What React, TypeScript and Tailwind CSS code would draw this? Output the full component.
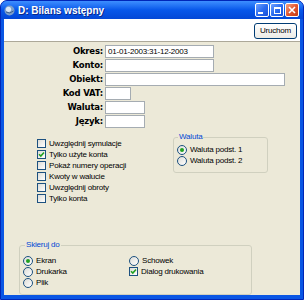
const labelFont = "font-['DejaVu_Sans',sans-serif] font-bold text-[8.5px] text-black";

const fields = [
  { label: "Okres:", width: "w-[109px]", value: "01-01-2003:31-12-2003" },
  { label: "Konto:", width: "w-[109px]", value: "" },
  { label: "Obiekt:", width: "w-[180px]", value: "" },
  { label: "Kod VAT:", width: "w-[26px]", value: "" },
  { label: "Waluta:", width: "w-[40px]", value: "" },
  { label: "Język:", width: "w-[40px]", value: "" },
];

const options = [
  { label: "Uwzględnij symulacje", checked: false },
  { label: "Tylko użyte konta", checked: true },
  { label: "Pokaż numery operacji", checked: false },
  { label: "Kwoty w walucie", checked: false },
  { label: "Uwzględnij obroty", checked: false },
  { label: "Tylko konta", checked: false },
];

const CheckBox = ({ checked }: { checked: boolean }) => (
  <span className="flex h-[9px] w-[9px] shrink-0 items-center justify-center border border-[#1C5180] bg-gradient-to-br from-[#DCDCD7] to-white">
    {checked && (
      <svg width="7" height="7" viewBox="0 0 7 7">
        <path d="M1 3.2 L2.8 5 L6 1.5" fill="none" stroke="#21A121" strokeWidth="1.6" />
      </svg>
    )}
  </span>
);

const Radio = ({ checked }: { checked: boolean }) => (
  <span className="flex h-[10px] w-[10px] shrink-0 items-center justify-center rounded-full border border-[#1C5180] bg-gradient-to-br from-[#DCDCD7] to-white">
    {checked && <span className="h-[4px] w-[4px] rounded-full bg-[#21A121]" />}
  </span>
);

const Row = ({ children, label }: { children: React.ReactNode; label: string }) => (
  <div className="flex h-[11px] items-center gap-[3px]">
    {children}
    <span className="whitespace-nowrap">{label}</span>
  </div>
);

const TitleButton = ({ kind }: { kind: "min" | "max" | "close" }) => {
  const bg =
    kind === "close"
      ? "bg-gradient-to-br from-[#F0A080] via-[#E2562F] to-[#C23A14]"
      : "bg-gradient-to-br from-[#6FA2FF] via-[#2C6CF0] to-[#1A4FD8]";
  return (
    <div className={`flex h-[14px] w-[14px] items-center justify-center rounded-[2px] border border-white ${bg}`}>
      {kind === "min" && <span className="mt-[6px] mr-[3px] h-[2px] w-[5px] bg-white" />}
      {kind === "max" && <span className="h-[7px] w-[7px] border border-t-2 border-white" />}
      {kind === "close" && (
        <svg width="8" height="8" viewBox="0 0 8 8">
          <path d="M1 1 L7 7 M7 1 L1 7" stroke="white" strokeWidth="1.6" />
        </svg>
      )}
    </div>
  );
};

export default function App() {
  return (
    <div className="flex h-[300px] w-[304px] flex-col overflow-hidden rounded-t-[7px] border border-[#0026B8] bg-[#0A56E4] font-['Liberation_Sans',sans-serif] text-[8px] tracking-[-0.2px] text-black">
      {/* title bar */}
      <div className="flex h-[18px] shrink-0 items-center bg-gradient-to-b from-[#3D8EFF] via-[#0757EA] to-[#0347D6] pl-[3px] pr-[4px]">
        <svg width="11" height="11" viewBox="0 0 11 11" className="shrink-0">
          <circle cx="5.5" cy="5.5" r="5" fill="#7C9FC9" />
          <circle cx="4.5" cy="4.3" r="2.6" fill="#D9E6F5" />
          <path d="M2 7 Q5.5 9.5 9.5 6" stroke="#3D5E8C" strokeWidth="1" fill="none" />
        </svg>
        <span className="ml-[3px] font-bold text-[10px] tracking-normal text-white [text-shadow:1px_1px_0_#0A2A8A]">
          D: Bilans wstępny
        </span>
        <div className="ml-auto flex gap-[1px]">
          <TitleButton kind="min" />
          <TitleButton kind="max" />
          <TitleButton kind="close" />
        </div>
      </div>

      {/* client area */}
      <div className="mx-[3px] mb-[4px] flex flex-1 flex-col bg-[#ECE9D8]">
        <div className="flex h-[22px] shrink-0 items-start justify-end bg-white pt-[4px] pr-[3px]">
          <div className="flex h-[16px] w-[43px] items-center justify-center rounded-[3px] border border-[#003C74] bg-gradient-to-b from-white to-[#ECEBE6]">
            Uruchom
          </div>
        </div>
        <div className="h-px shrink-0 bg-[#ACA899]" />

        {/* fields */}
        <div className="flex flex-col gap-[1px] pt-[3px]">
          {fields.map((f) => (
            <div key={f.label} className="flex h-[13px] items-center gap-[2px]">
              <span className={`w-[99px] text-right ${labelFont}`}>{f.label}</span>
              <div className={`flex h-[13px] items-center border border-[#A5ACB2] bg-white pl-[2px] ${f.width}`}>
                {f.value}
              </div>
            </div>
          ))}
        </div>

        {/* options */}
        <div className="mt-[10px] flex items-start">
          <div className="flex w-[169px] flex-col pl-[33px]">
            {options.map((o) => (
              <Row key={o.label} label={o.label}>
                <CheckBox checked={o.checked} />
              </Row>
            ))}
          </div>
          <fieldset className="-mt-[6px] w-[95px] rounded-[3px] border border-[#D0D0BF] pb-[6px]">
            <legend className="ml-[4px] px-[1px] leading-[10px] text-[#0046D5]">Waluta</legend>
            <div className="flex flex-col pl-[3px] pt-[2px]">
              <Row label="Waluta podst. 1">
                <Radio checked />
              </Row>
              <Row label="Waluta podst. 2">
                <Radio checked={false} />
              </Row>
            </div>
          </fieldset>
        </div>

        {/* output */}
        <fieldset className="mt-[36px] ml-[15px] h-[55px] w-[233px] rounded-[3px] border border-[#D0D0BF]">
          <legend className="ml-[5px] px-[1px] leading-[10px] text-[#0046D5]">Skieruj do</legend>
          <div className="flex pl-[3px] pt-[5px]">
            <div className="flex w-[106px] flex-col">
              <Row label="Ekran">
                <Radio checked />
              </Row>
              <Row label="Drukarka">
                <Radio checked={false} />
              </Row>
              <Row label="Plik">
                <Radio checked={false} />
              </Row>
            </div>
            <div className="flex flex-col">
              <Row label="Schowek">
                <Radio checked={false} />
              </Row>
              <Row label="Dialog drukowania">
                <CheckBox checked />
              </Row>
            </div>
          </div>
        </fieldset>
      </div>
    </div>
  );
}
